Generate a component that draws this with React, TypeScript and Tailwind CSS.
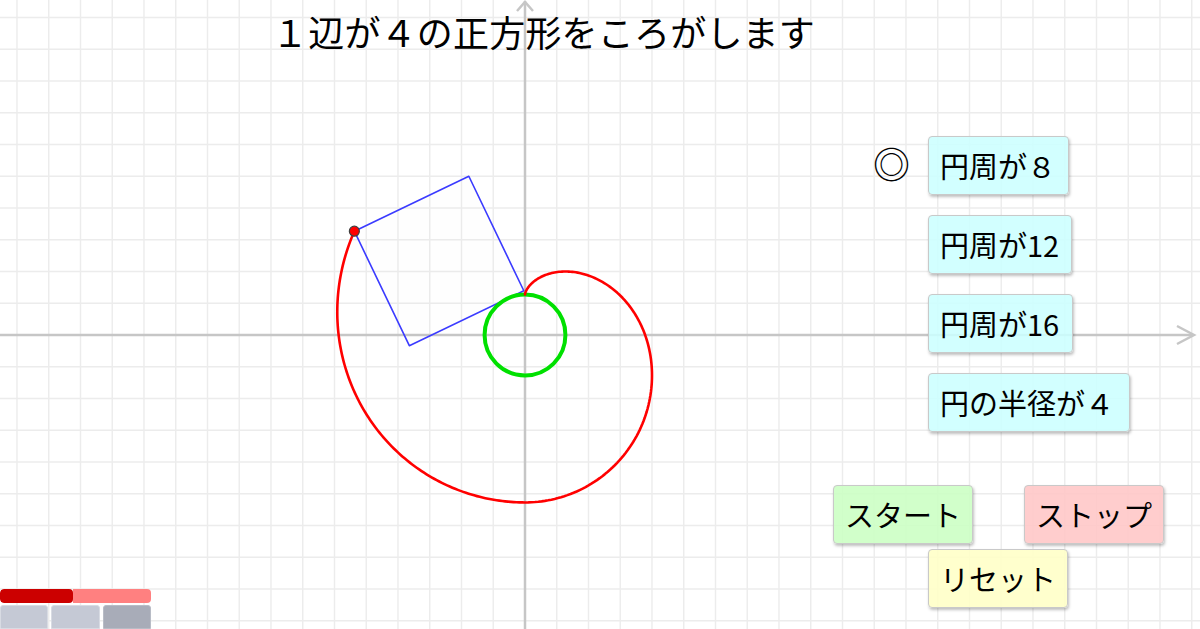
import React from "react";

const U = 31.75;
const OX = 525;
const OY = 335;
const R = 8 / (2 * Math.PI);
const S = 3.43;

const px = (x: number, y: number) => [OX + x * U, OY - y * U] as const;

function buildCurve() {
  const pts: (readonly [number, number])[] = [];
  const N1 = 120;
  for (let i = 0; i <= N1; i++) {
    const s = (4 * i) / N1;
    const phi = Math.PI / 2 - s / R;
    const cx = R * Math.cos(phi);
    const cy = R * Math.sin(phi);
    const tx = Math.sin(phi);
    const ty = -Math.cos(phi);
    pts.push(px(cx - s * tx, cy - s * ty));
  }
  const N2 = 60;
  for (let i = 1; i <= N2; i++) {
    const th = (-Math.PI / 2) * (i / N2);
    pts.push(px(4 * Math.cos(th), -R + 4 * Math.sin(th)));
  }
  const N3 = 120;
  for (let i = 1; i <= N3; i++) {
    const s = (S * i) / N3;
    const phi = -Math.PI / 2 - s / R;
    const nx = Math.cos(phi);
    const ny = Math.sin(phi);
    const tx = Math.sin(phi);
    const ty = -Math.cos(phi);
    const bx = R * nx - s * tx;
    const by = R * ny - s * ty;
    pts.push(px(bx + 4 * nx, by + 4 * ny));
  }
  return pts.map((p, i) => `${i === 0 ? "M" : "L"}${p[0].toFixed(2)},${p[1].toFixed(2)}`).join(" ");
}

function squareNow() {
  const phi = -Math.PI / 2 - S / R;
  const nx = Math.cos(phi);
  const ny = Math.sin(phi);
  const tx = Math.sin(phi);
  const ty = -Math.cos(phi);
  const bx = R * nx - S * tx;
  const by = R * ny - S * ty;
  const B = [bx, by];
  const A = [bx + 4 * nx, by + 4 * ny];
  const C = [bx + 4 * tx, by + 4 * ty];
  const D = [C[0] + 4 * nx, C[1] + 4 * ny];
  return { A: px(A[0], A[1]), B: px(B[0], B[1]), C: px(C[0], C[1]), D: px(D[0], D[1]) };
}

function Canvas() {
  const vLines: number[] = [];
  for (let k = -20; k <= 30; k++) {
    const x = OX + k * U;
    if (x >= -2 && x <= 1202 && k !== 0) vLines.push(x);
  }
  const hLines: number[] = [];
  for (let k = -15; k <= 15; k++) {
    const y = OY + k * U;
    if (y >= -2 && y <= 631 && k !== 0) hLines.push(y);
  }
  const curve = buildCurve();
  const sq = squareNow();
  const polyStr = [sq.A, sq.B, sq.C, sq.D].map((p) => `${p[0]},${p[1]}`).join(" ");
  return (
    <svg className="absolute inset-0" width="1200" height="629" viewBox="0 0 1200 629">
      <rect x="0" y="0" width="1200" height="629" fill="#ffffff" />
      {vLines.map((x) => (
        <line key={"v" + x} x1={x} y1={0} x2={x} y2={629} stroke="#ececec" strokeWidth="1.4" />
      ))}
      {hLines.map((y) => (
        <line key={"h" + y} x1={0} y1={y} x2={1200} y2={y} stroke="#ececec" strokeWidth="1.4" />
      ))}
      <line x1={OX} y1={1} x2={OX} y2={629} stroke="#c6c6c6" strokeWidth="2.5" />
      <line x1={0} y1={OY} x2={1193} y2={OY} stroke="#c6c6c6" strokeWidth="2.5" />
      <polyline points={`${OX - 8},11 ${OX},2 ${OX + 8},11`} fill="none" stroke="#c6c6c6" strokeWidth="2.5" />
      <polyline points={`1177,326 1194,${OY} 1177,344`} fill="none" stroke="#c6c6c6" strokeWidth="2.5" />
      <polygon points={polyStr} fill="#9090b0" fillOpacity="0.012" stroke="#3b3bff" strokeWidth="1.6" strokeLinejoin="round" />
      <circle cx={OX} cy={OY} r={R * U} fill="none" stroke="#00e000" strokeWidth="4" />
      <path d={curve} fill="none" stroke="#ff0000" strokeWidth="2.6" strokeLinejoin="round" strokeLinecap="round" />
      <circle cx={sq.A[0]} cy={sq.A[1]} r="5" fill="#ff0000" stroke="#404040" strokeWidth="1.2" />
    </svg>
  );
}

const jp = { fontFamily: '"Noto Sans CJK JP", "Noto Sans", sans-serif' };

function Btn({ label, cls }: { label: string; cls: string }) {
  return (
    <div
      className={`flex h-[59px] items-center rounded-[4px] border border-[#c9c9c9] pl-[11px] text-[29px] leading-none text-black shadow-[1px_2px_3px_rgba(0,0,0,0.25)] ${cls}`}
      style={jp}
    >
      {label}
    </div>
  );
}

export default function App() {
  return (
    <div className="relative h-[629px] w-[1200px] overflow-hidden bg-white">
      <Canvas />
      <div className="absolute left-[272px] top-[13px] text-[36px] leading-none tracking-[0.2px] text-black" style={jp}>
        １辺が４の正方形をころがします
      </div>
      <div className="absolute left-[873px] top-[145px] text-[37px] leading-none text-black" style={jp}>
        ◎
      </div>
      <div className="absolute left-[928px] top-[136px] flex flex-col gap-[20px]">
        <Btn label="円周が８" cls="w-[141px] bg-[rgba(204,255,255,0.88)]" />
        <Btn label="円周が12" cls="w-[144px] bg-[rgba(204,255,255,0.88)]" />
        <Btn label="円周が16" cls="w-[145px] bg-[rgba(204,255,255,0.88)]" />
        <Btn label="円の半径が４" cls="w-[202px] bg-[rgba(204,255,255,0.88)]" />
      </div>
      <div className="absolute left-[833px] top-[485px] flex gap-[51px]">
        <Btn label="スタート" cls="w-[140px] bg-[rgba(204,255,196,0.9)]" />
        <Btn label="ストップ" cls="w-[140px] bg-[rgba(255,200,200,0.9)]" />
      </div>
      <div className="absolute left-[928px] top-[549px]">
        <Btn label="リセット" cls="w-[140px] bg-[rgba(255,255,200,0.9)]" />
      </div>
      <div className="absolute bottom-0 left-0 flex w-[151px] flex-col gap-[2px]">
        <div className="flex h-[14px] overflow-hidden rounded-[4px]">
          <div className="w-[73px] rounded-[4px] bg-[#cc0000]" />
          <div className="flex-1 bg-[#ff8080]" />
        </div>
        <div className="flex h-[24px] gap-[3px]">
          <div className="flex-1 rounded-t-[3px] border border-[#d8dbe3] bg-[#c5c9d5]" />
          <div className="flex-1 rounded-t-[3px] border border-[#d8dbe3] bg-[#c5c9d5]" />
          <div className="flex-1 rounded-t-[3px] border border-[#b8bcc6] bg-[#a8acb8]" />
        </div>
      </div>
    </div>
  );
}
